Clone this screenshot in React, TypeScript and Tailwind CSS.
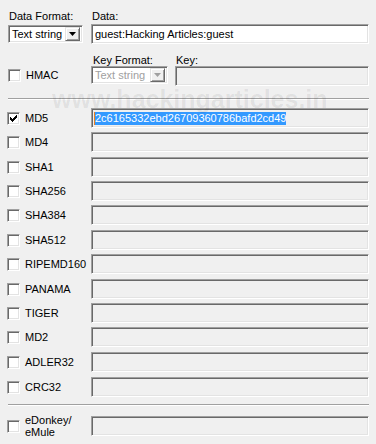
import React from 'react';

const font = { fontFamily: '"Liberation Sans", Arial, sans-serif' };

function Sunken({ className = '', children }: { className?: string; children?: React.ReactNode }) {
  return (
    <div
      className={`border border-t-[#a0a0a0] border-l-[#a0a0a0] border-r-white border-b-white shadow-[inset_1px_1px_0_#696969,inset_-1px_-1px_0_#e3e3e3] ${className}`}
    >
      {children}
    </div>
  );
}

function Check({ checked = false }: { checked?: boolean }) {
  return (
    <Sunken className="flex h-[13px] w-[13px] shrink-0 items-center justify-center bg-white">
      {checked && (
        <svg width="7" height="7" viewBox="0 0 7 7">
          <path d="M0 2h1v1h1v1h1V3h1V2h1V1h1V0h1v3H6v1H5v1H4v1H3v1H2V6H1V5H0z" fill="#000" />
        </svg>
      )}
    </Sunken>
  );
}

function Combo({ disabled = false, className = '' }: { disabled?: boolean; className?: string }) {
  return (
    <Sunken className={`flex h-[18px] items-center justify-between bg-white pl-[3px] pr-[2px] ${className}`}>
      <span className={disabled ? 'text-[#a0a0a0]' : 'text-black'}>Text string</span>
      <div className="flex h-[14px] w-[15px] items-center justify-center border border-t-[#e3e3e3] border-l-[#e3e3e3] border-r-[#696969] border-b-[#696969] bg-[#f0f0f0] shadow-[inset_1px_1px_0_#fff,inset_-1px_-1px_0_#a0a0a0]">
        <svg width="7" height="4" viewBox="0 0 7 4">
          <path d="M0 0h7L3.5 4z" fill={disabled ? '#a0a0a0' : '#000'} />
        </svg>
      </div>
    </Sunken>
  );
}

// name + gap above the row (rows sit ~24.5px apart)
const hashes: [string, number][] = [
  ['MD5', 0],
  ['MD4', 4],
  ['SHA1', 5],
  ['SHA256', 4],
  ['SHA384', 4],
  ['SHA512', 5],
  ['RIPEMD160', 4],
  ['PANAMA', 5],
  ['TIGER', 4],
  ['MD2', 4],
  ['ADLER32', 5],
  ['CRC32', 5],
];

function Separator({ className = '' }: { className?: string }) {
  return <div className={`ml-[8px] w-[361px] border-t border-t-[#a0a0a0] border-b border-b-white ${className}`} />;
}

export default function App() {
  return (
    <div className="relative h-[444px] w-[376px] overflow-hidden bg-[#f0f0f0] text-[11px] leading-[13px] text-black" style={font}>
      <div className="flex pt-[10px] pl-[8px]">
        <div className="w-[83px]">
          <div className="pl-[1px]">Data Format:</div>
          <Combo className="mt-[2px] w-[75px]" />
        </div>
        <div className="w-[278px]">
          <div className="pl-[1px]">Data:</div>
          <Sunken className="mt-[1px] flex h-[20px] items-center bg-white pl-[3px]">guest:Hacking Articles:guest</Sunken>
        </div>
      </div>

      <div className="mt-[10px] flex pl-[8px]">
        <div className="flex w-[83px] items-center gap-[5px] pt-[10px]">
          <Check />
          <span>HMAC</span>
        </div>
        <div className="w-[84px]">
          <div className="pl-[2px] text-black">Key Format:</div>
          <Combo disabled className="mt-[-1px] w-[77px]" />
        </div>
        <div className="w-[194px]">
          <div className="pl-[1px]">Key:</div>
          <Sunken className="mt-[-1px] h-[20px] bg-[#f0f0f0]" />
        </div>
      </div>

      <Separator className="mt-[12px]" />

      <div className="mt-[8px]">
        {hashes.map(([name, gap], i) => (
          <div key={name} className="flex items-center pl-[7px]" style={{ marginTop: gap }}>
            <div className="flex w-[84px] items-center gap-[5px]">
              <Check checked={i === 0} />
              <span>{name}</span>
            </div>
            <Sunken className="flex h-[20px] w-[278px] items-center bg-[#f0f0f0] pl-[2px]">
              {i === 0 && (
                <>
                  <span className="h-[13px] w-px bg-[#f08020]" />
                  <span className="bg-[#3399ff] text-white">2c6165332ebd26709360786bafd2cd49</span>
                </>
              )}
            </Sunken>
          </div>
        ))}
      </div>

      <Separator className="mt-[7px]" />

      <div className="mt-[8px] flex items-center pl-[7px]">
        <div className="flex w-[84px] items-center gap-[5px]">
          <Check />
          <span className="leading-[12px]">
            eDonkey/
            <br />
            eMule
          </span>
        </div>
        <Sunken className="h-[20px] w-[278px] bg-[#f0f0f0]" />
      </div>

      <div className="pointer-events-none absolute left-[52px] top-[84px] text-[25px] font-bold leading-[30px] text-black/[0.07]">
        www.hackingarticles.in
      </div>
    </div>
  );
}
